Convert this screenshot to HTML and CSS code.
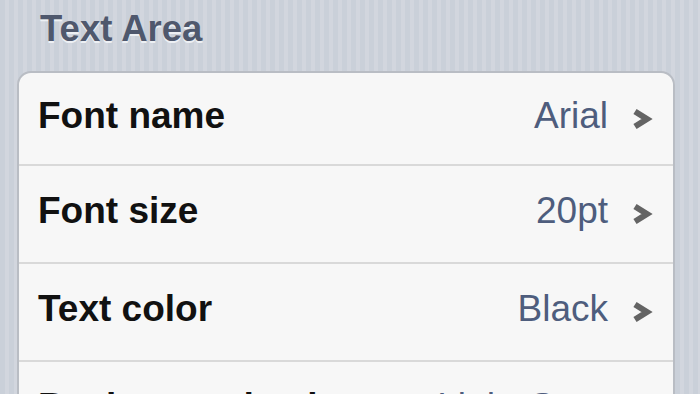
FILE: index.html
```html
<!DOCTYPE html>
<html lang="en">

<head>
    <meta charset="UTF-8">
    <meta name="viewport" content="width=device-width, initial-scale=1.0">
    <title>Text Area Settings</title>
    <link rel="stylesheet" href="styles.css">
</head>

<body>
    <!-- Group header -->
    <h2 class="group-title">Text Area</h2>

    <!-- Grouped table -->
    <ul class="group">
        <li class="cell">
            <span class="label">Font name</span>
            <span class="value">Arial</span>
            <svg class="chevron" width="22" height="22" viewBox="0 0 22 22"><polyline points="4,3.5 16,11 4,18.5"/></svg>
        </li>
        <li class="cell">
            <span class="label">Font size</span>
            <span class="value">20pt</span>
            <svg class="chevron" width="22" height="22" viewBox="0 0 22 22"><polyline points="4,3.5 16,11 4,18.5"/></svg>
        </li>
        <li class="cell">
            <span class="label">Text color</span>
            <span class="value">Black</span>
            <svg class="chevron" width="22" height="22" viewBox="0 0 22 22"><polyline points="4,3.5 16,11 4,18.5"/></svg>
        </li>
        <li class="cell">
            <span class="label">Background color</span>
            <span class="value">Light Gray</span>
            <svg class="chevron" width="22" height="22" viewBox="0 0 22 22"><polyline points="4,3.5 16,11 4,18.5"/></svg>
        </li>
    </ul>
</body>

</html>
```

FILE: styles.css
```css
/* Grouped settings table */

body {
    margin: 0;
    height: 394px;
    overflow: hidden;
    font-family: "Liberation Sans", Arial, sans-serif;
    background-color: #ccd1da;
    background-image: repeating-linear-gradient(90deg, #cad0d9 0, #cad0d9 5px, #d2d6de 5px, #d2d6de 9px);
}

.group-title {
    margin: 0;
    padding: 8px 0 0 40px;
    font-size: 36.5px;
    line-height: 42px;
    font-weight: bold;
    color: #4f586d;
    text-shadow: 0 2px 0 #edf0f4;
}

.group {
    list-style: none;
    margin: 21px 0 0 17px;
    padding: 0;
    width: 654px;
    background: #f7f7f7;
    border: 2px solid #b9bdc4;
    border-radius: 14px;
    box-shadow: 0 2px 0 #e4e7ec;
}

.cell {
    display: flex;
    align-items: center;
    height: 90px;
    padding: 0 20px 6px 19px;
    border-bottom: 2px solid #d9d9d9;
}

.cell:first-child {
    height: 85px;
}

.label {
    flex: 1;
    font-size: 37px;
    font-weight: bold;
    color: #111;
}

.value {
    font-size: 37px;
    color: #4e5d7d;
}

.chevron {
    flex: none;
    margin: 6px 0 0 23px;
    fill: none;
    stroke: #646464;
    stroke-width: 6;
    stroke-linejoin: miter;
}
```
